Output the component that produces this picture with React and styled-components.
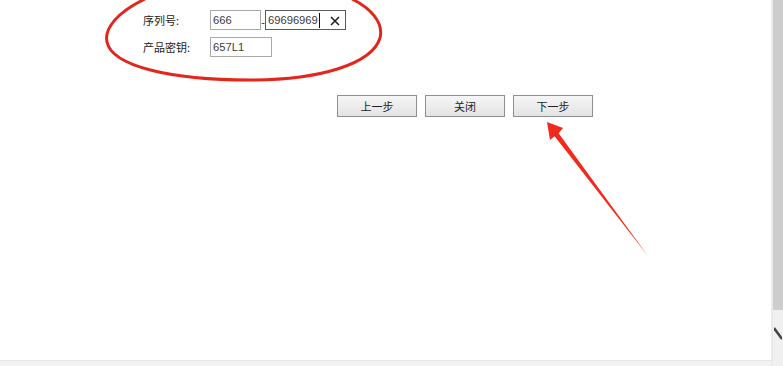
import React from 'react'
import styled, { createGlobalStyle } from 'styled-components'

const GlobalStyle = createGlobalStyle`
    html, body {
        margin: 0;
        padding: 0;
        background: #fff;
    }
`

const Page = styled.div`
    position: relative;
    width: 783px;
    height: 366px;
    display: flex;
    overflow: hidden;
    font-family: "Liberation Sans", "Noto Sans CJK SC", sans-serif;
`
const Column = styled.div`
    flex: 1;
    display: flex;
    flex-direction: column;
`
const Content = styled.div`
    flex: 1;
    padding: 10px 0 0 143px;
`
const BottomBar = styled.div`
    height: 5px;
    background: #f2f2f1;
    border-top: 1px solid #e6e6e4;
`
const Scrollbar = styled.div`
    width: 10px;
    border-left: 2px solid #ebebeb;
    background: #f0f0f0;
    display: flex;
    flex-direction: column;
`
const Thumb = styled.div`
    height: 310px;
    background: #cdcdcd;
`
const Grip = styled.svg`
    margin-top: 17px;
    margin-left: 1px;
`

const Form = styled.div`
    display: grid;
    grid-template-columns: 67px auto;
    row-gap: 7px;
    align-items: center;
`
const Label = styled.span`
    font-family: "Noto Sans CJK SC", sans-serif;
    font-size: 11px;
    color: #222;
`
const Fields = styled.div`
    display: flex;
    align-items: center;
`
const Input = styled.div`
    position: relative;
    box-sizing: border-box;
    width: ${p => p.$w}px;
    height: 20px;
    border: 1px solid ${p => (p.$focus ? '#5a5a5a' : '#a9a9a9')};
    padding-left: 2px;
    display: flex;
    align-items: center;
    font-size: 11.2px;
    color: #3c3c3c;
`
const Caret = styled.span`
    display: inline-block;
    width: 1px;
    height: 15px;
    background: #111;
    margin-left: 1px;
`
const Clear = styled.svg`
    position: absolute;
    right: 5px;
    top: 5px;
`
const Dash = styled.span`
    width: 4px;
    font-size: 11px;
    color: #333;
    text-align: center;
    margin-top: 3px;
`

const Buttons = styled.div`
    display: flex;
    gap: 8px;
    margin: 38px 0 0 194px;
`
const Button = styled.div`
    box-sizing: border-box;
    width: 80px;
    height: 22px;
    border: 1px solid #8f8f8f;
    background: linear-gradient(#f6f6f6, #e3e3e3);
    display: flex;
    align-items: center;
    justify-content: center;
    font-family: "Noto Sans CJK SC", sans-serif;
    font-size: 11px;
    color: #222;
`

const Annotation = styled.svg`
    position: absolute;
    left: 0;
    top: 0;
    pointer-events: none;
`

const App = () => (
    <>
        <GlobalStyle />
        <Page>
            <Column>
                <Content>
                    <Form>
                        <Label>序列号:</Label>
                        <Fields>
                            <Input $w={51}>666</Input>
                            <Dash>-</Dash>
                            <Input $w={81} $focus>
                                69696969<Caret />
                                <Clear width="10" height="10" viewBox="0 0 10 10">
                                    <path d="M1 1L9 9M9 1L1 9" stroke="#222" strokeWidth="1.6" />
                                </Clear>
                            </Input>
                        </Fields>
                        <Label>产品密钥:</Label>
                        <Fields>
                            <Input $w={62}>657L1</Input>
                        </Fields>
                    </Form>
                    <Buttons>
                        <Button>上一步</Button>
                        <Button>关闭</Button>
                        <Button>下一步</Button>
                    </Buttons>
                </Content>
                <BottomBar />
            </Column>
            <Scrollbar>
                <Thumb />
                <Grip width="8" height="14" viewBox="0 0 8 14">
                    <path d="M0 1L8 12" stroke="#444" strokeWidth="2.5" />
                </Grip>
            </Scrollbar>
            <Annotation width="783" height="366" viewBox="0 0 783 366">
                <path
                    d="M145 -1 C118 12, 104 28, 107 42 C112 66, 170 80, 250 80 C320 80, 372 64, 380 38 C384 22, 370 8, 352 -1"
                    fill="none"
                    stroke="#e3261c"
                    strokeWidth="3"
                />
                <polygon
                    points="547,122 563,128 558.6,133.3 648,256 554.6,136.3 550,140"
                    fill="#f2291b"
                />
            </Annotation>
        </Page>
    </>
)

export default App
